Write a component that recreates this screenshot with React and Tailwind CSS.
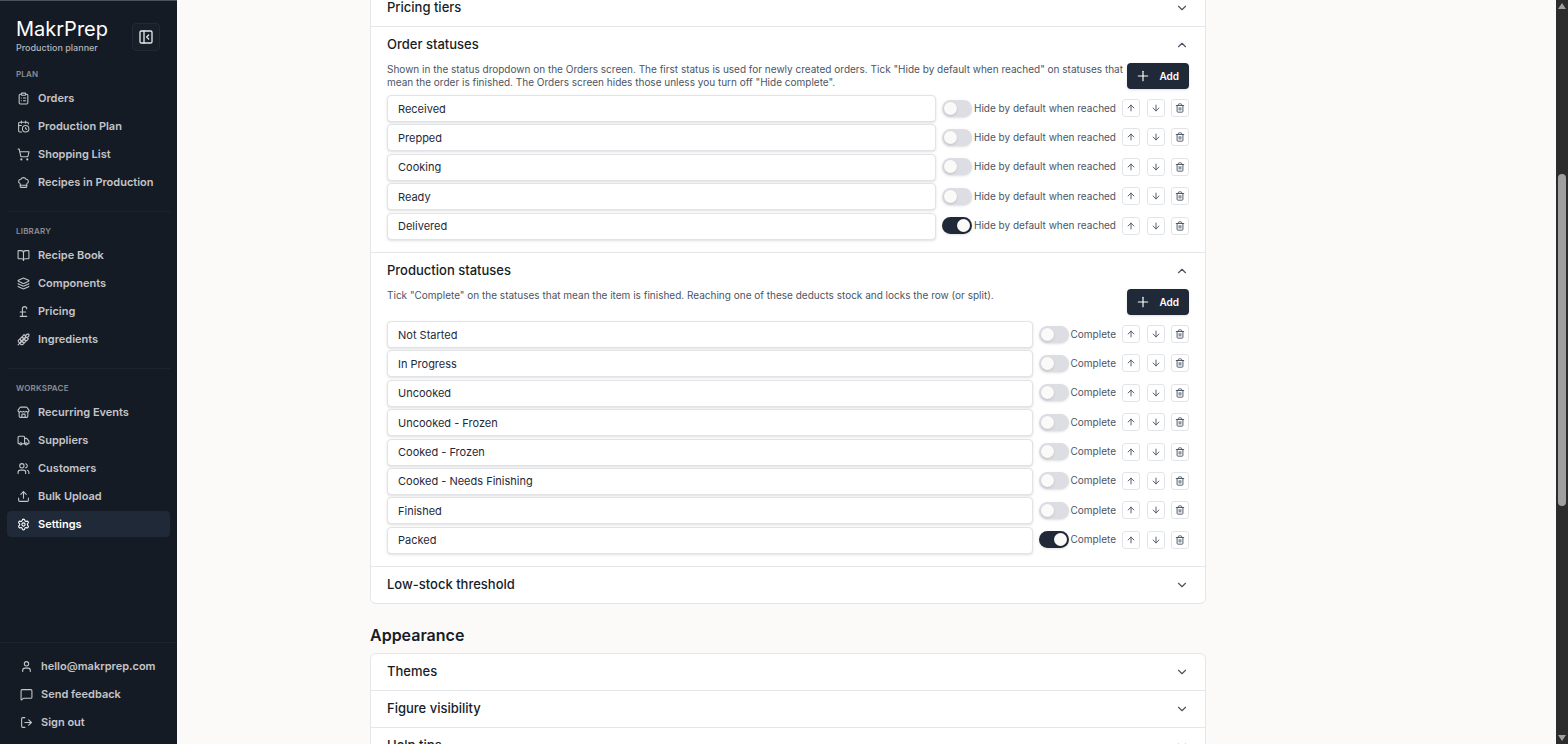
import { useState } from "react";
import {
  ArrowDown,
  ArrowUp,
  BookOpen,
  CalendarClock,
  ChefHat,
  ChevronDown,
  ChevronUp,
  ClipboardList,
  Layers,
  LogOut,
  MessageSquare,
  PanelLeftClose,
  Plus,
  PoundSterling,
  Settings,
  ShoppingCart,
  Store,
  Trash2,
  Truck,
  Upload,
  User,
  Users,
  Wheat,
} from "lucide-react";

const NAV = [
  {
    title: "Plan",
    items: [
      { label: "Orders", icon: ClipboardList },
      { label: "Production Plan", icon: CalendarClock },
      { label: "Shopping List", icon: ShoppingCart },
      { label: "Recipes in Production", icon: ChefHat },
    ],
  },
  {
    title: "Library",
    items: [
      { label: "Recipe Book", icon: BookOpen },
      { label: "Components", icon: Layers },
      { label: "Pricing", icon: PoundSterling },
      { label: "Ingredients", icon: Wheat },
    ],
  },
  {
    title: "Workspace",
    items: [
      { label: "Recurring Events", icon: Store },
      { label: "Suppliers", icon: Truck },
      { label: "Customers", icon: Users },
      { label: "Bulk Upload", icon: Upload },
      { label: "Settings", icon: Settings, active: true },
    ],
  },
];

const ACCOUNT = [
  { label: "hello@makrprep.com", icon: User },
  { label: "Send feedback", icon: MessageSquare },
  { label: "Sign out", icon: LogOut },
];

const ORDER_STATUSES = [
  { name: "Received", on: false },
  { name: "Prepped", on: false },
  { name: "Cooking", on: false },
  { name: "Ready", on: false },
  { name: "Delivered", on: true },
];

const PRODUCTION_STATUSES = [
  { name: "Not Started", on: false },
  { name: "In Progress", on: false },
  { name: "Uncooked", on: false },
  { name: "Uncooked - Frozen", on: false },
  { name: "Cooked - Frozen", on: false },
  { name: "Cooked - Needs Finishing", on: false },
  { name: "Finished", on: false },
  { name: "Packed", on: true },
];

function NavLink({ label, icon: Icon, active }) {
  return (
    <a
      href="#"
      aria-current={active ? "page" : undefined}
      className={
        active
          ? "flex h-[26px] items-center gap-2 rounded bg-[#1f2937] px-[10px] text-white"
          : "flex h-[26px] items-center gap-2 rounded px-[10px] text-[#c3c5c9]"
      }
    >
      <Icon className="size-[13px] shrink-0" strokeWidth={2} />
      <span className="whitespace-nowrap">{label}</span>
    </a>
  );
}

function Sidebar() {
  return (
    <aside className="flex w-[177px] shrink-0 flex-col border-t border-[#4b515b] bg-[#151b24] text-[11px] font-semibold">
      <div className="flex items-start justify-between pt-4 pr-[17px] pl-4">
        <div>
          <div className="text-[20px] leading-6 font-normal text-white">MakrPrep</div>
          <div className="pt-px text-[9px] leading-[11px] font-medium text-[#b4b6ba]">
            Production planner
          </div>
        </div>
        <button
          type="button"
          aria-label="Collapse sidebar"
          className="mt-[6px] flex size-7 items-center justify-center rounded border border-[#232a35] bg-[#191f29] text-[#e5e7eb]"
        >
          <PanelLeftClose className="size-4" />
        </button>
      </div>
      <nav className="flex flex-col px-[7px] pt-4">
        {NAV.map((group, i) => (
          <section
            key={group.title}
            className={i === 0 ? "" : "mt-4 border-t border-[#1d2430] pt-[14px]"}
          >
            <h2 className="pl-[9px] text-[8px] leading-[11px] font-semibold tracking-wide text-[#8b8e94] uppercase">
              {group.title}
            </h2>
            <div className="mt-[5px] flex flex-col gap-[2px]">
              {group.items.map((item) => (
                <NavLink key={item.label} {...item} />
              ))}
            </div>
          </section>
        ))}
      </nav>
      <div className="mt-auto flex flex-col gap-[2px] border-t border-[#1d2430] px-[10px] pt-[10px] pb-[9px]">
        {ACCOUNT.map((item) => (
          <NavLink key={item.label} {...item} />
        ))}
      </div>
    </aside>
  );
}

function SectionHeader({ title, open }) {
  const Chevron = open ? ChevronUp : ChevronDown;
  return (
    <h3>
      <button
        type="button"
        aria-expanded={Boolean(open)}
        className="flex h-9 w-full items-center justify-between pr-4 pl-4 text-left text-[13px] font-medium text-[#161d28]"
      >
        {title}
        <Chevron className="size-[14px] text-[#4b5563]" />
      </button>
    </h3>
  );
}

function IconButton({ label, icon: Icon }) {
  return (
    <button
      type="button"
      aria-label={label}
      className="flex size-[18px] items-center justify-center rounded-[3px] border border-[#e2e4e8] bg-white text-[#4b5563]"
    >
      <Icon className="size-[10px] shrink-0" strokeWidth={2.25} />
    </button>
  );
}

function StatusRow({ status, toggleLabel }) {
  const [name, setName] = useState(status.name);
  const [on, setOn] = useState(status.on);
  return (
    <li className="flex items-start gap-[6px]">
      <input
        type="text"
        aria-label="Status name"
        value={name}
        onChange={(e) => setName(e.target.value)}
        className="h-[27px] min-w-0 flex-1 rounded border border-[#e1e3e7] bg-white px-[10px] text-[11px] text-[#1f2937] shadow-sm"
      />
      <label className="flex h-[26px] items-center gap-[2px] text-[10px] text-[#4b5563]">
        <input
          type="checkbox"
          role="switch"
          checked={on}
          onChange={(e) => setOn(e.target.checked)}
          className="h-[17px] w-[30px] appearance-none rounded-full bg-[#dcdee3] p-[2px] shadow-sm before:block before:size-[13px] before:rounded-full before:bg-[#fbfaf8] before:shadow-sm checked:bg-[#1f2937] checked:before:translate-x-[13px]"
        />
        <span className="whitespace-nowrap">{toggleLabel}</span>
      </label>
      <div className="flex h-[26px] w-[67px] shrink-0 items-center justify-between">
        <IconButton label={`Move ${name} up`} icon={ArrowUp} />
        <IconButton label={`Move ${name} down`} icon={ArrowDown} />
        <IconButton label={`Delete ${name}`} icon={Trash2} />
      </div>
    </li>
  );
}

function StatusSection({ title, description, statuses, toggleLabel, listClass }) {
  return (
    <section>
      <SectionHeader title={title} open />
      <div className="px-4 pb-[10px]">
        <div className="flex items-start justify-between">
          <p className="text-[10px] leading-[13px] text-[#4b5563]">{description}</p>
          <button
            type="button"
            className="flex h-[26px] w-[62px] shrink-0 items-center justify-between rounded bg-[#1f2937] pr-[10px] pl-2 text-[10px] font-semibold text-white shadow-sm"
          >
            <Plus className="size-4" strokeWidth={1.75} />
            Add
          </button>
        </div>
        <ul className={listClass}>
          {statuses.map((s) => (
            <StatusRow key={s.name} status={s} toggleLabel={toggleLabel} />
          ))}
        </ul>
      </div>
    </section>
  );
}

function Card({ children }) {
  return (
    <div className="divide-y divide-[#e4e6ea] rounded-md border border-[#e4e6ea] bg-white">
      {children}
    </div>
  );
}

function Scrollbar() {
  return (
    <div aria-hidden="true" className="flex w-3 shrink-0 flex-col items-center bg-[#2c2c2c] py-[3px]">
      <svg viewBox="0 0 8 6" className="h-[6px] w-2 fill-[#9f9f9f]">
        <path d="M4 0 8 6H0z" />
      </svg>
      <div className="flex w-full flex-1 flex-col items-center">
        <div className="grow-[165]" />
        <div className="w-2 grow-[332] rounded-full bg-[#9f9f9f]" />
        <div className="grow-[229]" />
      </div>
      <svg viewBox="0 0 8 6" className="h-[6px] w-2 fill-[#9f9f9f]">
        <path d="M0 0h8L4 6z" />
      </svg>
    </div>
  );
}

export default function App() {
  return (
    <div className="flex h-screen overflow-hidden bg-[#fbfaf9] font-['Inter',sans-serif]">
      <Sidebar />
      <main className="min-w-0 flex-1 overflow-hidden">
        <div className="mx-auto max-w-[993px]">
          <div className="-mt-[11px] max-w-[836px]">
            <Card>
              <SectionHeader title="Pricing tiers" />
              <StatusSection
                title="Order statuses"
                description={
                  'Shown in the status dropdown on the Orders screen. The first status is used for newly created orders. Tick "Hide by default when reached" on statuses that mean the order is finished. The Orders screen hides those unless you turn off "Hide complete".'
                }
                statuses={ORDER_STATUSES}
                toggleLabel="Hide by default when reached"
                listClass="mt-[6px] grid h-[147px] auto-rows-fr"
              />
              <StatusSection
                title="Production statuses"
                description={
                  'Tick "Complete" on the statuses that mean the item is finished. Reaching one of these deducts stock and locks the row (or split).'
                }
                statuses={PRODUCTION_STATUSES}
                toggleLabel="Complete"
                listClass="mt-[6px] grid h-[235px] auto-rows-fr"
              />
              <SectionHeader title="Low-stock threshold" />
            </Card>
            <h2 className="mt-5 mb-[7px] text-[16px] leading-[22px] font-semibold text-[#161d28]">
              Appearance
            </h2>
            <Card>
              <SectionHeader title="Themes" />
              <SectionHeader title="Figure visibility" />
              <SectionHeader title="Help tips" />
            </Card>
          </div>
        </div>
      </main>
      <Scrollbar />
    </div>
  );
}
